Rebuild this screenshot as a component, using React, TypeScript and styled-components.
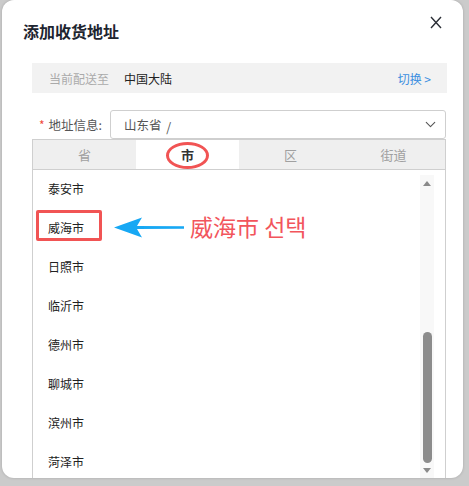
import React, { useState } from 'react';
import styled, { createGlobalStyle } from 'styled-components';
import { ChevronDown } from 'lucide-react';

const GlobalStyle = createGlobalStyle`
  html, body {
    margin: 0;
    padding: 0;
    background: #cbcbcb;
  }
  body {
    font-family: 'Noto Sans CJK SC', 'Noto Sans', sans-serif;
  }
`;

const TABS = ['省', '市', '区', '街道'];
const CITIES = ['泰安市', '威海市', '日照市', '临沂市', '德州市', '聊城市', '滨州市', '菏泽市'];

export default function App() {
  const [activeTab, setActiveTab] = useState(1);
  return (
    <Page>
      <GlobalStyle />
      <Dialog>
        <Header>
          <Title>添加收货地址</Title>
          <CloseButton>
            <svg width="12" height="13" viewBox="0 0 12 13">
              <path d="M1 1 L11 12 M11 1 L1 12" stroke="#2b2f36" strokeWidth="1.4" fill="none" />
            </svg>
          </CloseButton>
        </Header>
        <Body>
          <InfoBar>
            <InfoLabel>当前配送至</InfoLabel>
            <InfoValue>中国大陆</InfoValue>
            <SwitchLink>切换 &gt;</SwitchLink>
          </InfoBar>
          <FieldRow>
            <FieldLabel>
              <Required>*</Required>
              地址信息:
            </FieldLabel>
            <Select>
              <SelectText>山东省 <Slash>/</Slash></SelectText>
              <ChevronDown size={17} strokeWidth={1.5} color="#555" />
            </Select>
          </FieldRow>
          <Panel>
            <TabBar>
              {TABS.map((t, i) => (
                <Tab key={t} $active={i === activeTab} onClick={() => setActiveTab(i)}>
                  {t}
                  {i === 1 && <TabRing />}
                </Tab>
              ))}
            </TabBar>
            <ListArea>
              <List>
                {CITIES.map((c) => (
                  <Row key={c}>
                    {c}
                    {c === '威海市' && (
                      <>
                        <HighlightBox />
                        <Arrow width="70" height="21" viewBox="0 0 70 21">
                          <path d="M0 10.5 L28 0.5 L23 9 L70 9.3 L70 11.7 L23 12 L28 20.5 Z" fill="#17a8f4" />
                        </Arrow>
                        <Note>威海市 선택</Note>
                      </>
                    )}
                  </Row>
                ))}
              </List>
              <Scrollbar>
                <ArrowUp />
                <Spacer />
                <Thumb />
                <ArrowDown />
              </Scrollbar>
            </ListArea>
          </Panel>
        </Body>
      </Dialog>
    </Page>
  );
}

const Page = styled.div`
  height: 486px;
  padding: 0 6px 8px 2px;
  box-sizing: border-box;
  background: #cbcbcb;
`;

const Dialog = styled.div`
  height: 478px;
  background: #fff;
  border-radius: 12px;
  box-shadow: 0 0 3px rgba(0, 0, 0, 0.18);
  display: flex;
  flex-direction: column;
  overflow: hidden;
`;

const Header = styled.div`
  height: 63px;
  flex-shrink: 0;
  display: flex;
  align-items: center;
  justify-content: space-between;
  padding: 0 21px 2px 21px;
  box-sizing: border-box;
`;

const Title = styled.div`
  font-size: 16px;
  font-weight: 700;
  color: #1e2530;
  line-height: 20px;
`;

const CloseButton = styled.div`
  align-self: flex-start;
  margin-top: 16px;
  width: 12px;
  height: 13px;
  display: flex;
  cursor: pointer;
`;

const Body = styled.div`
  flex: 1;
  min-height: 0;
  display: flex;
  flex-direction: column;
  margin: 0 16px 0 30px;
`;

const InfoBar = styled.div`
  height: 30px;
  flex-shrink: 0;
  background: #f2f2f2;
  display: flex;
  align-items: center;
  padding: 0 16px 0 17px;
  font-size: 12px;
`;

const InfoLabel = styled.span`
  color: #aaa;
  width: 75px;
`;

const InfoValue = styled.span`
  color: #222;
  flex: 1;
`;

const SwitchLink = styled.span`
  color: #3b8ee0;
  cursor: pointer;
`;

const FieldRow = styled.div`
  margin-top: 17px;
  height: 29px;
  flex-shrink: 0;
  display: flex;
  align-items: stretch;
`;

const FieldLabel = styled.div`
  width: 78px;
  flex-shrink: 0;
  display: flex;
  align-items: center;
  justify-content: flex-end;
  padding-right: 8px;
  box-sizing: border-box;
  font-size: 12.5px;
  color: #555;
`;

const Required = styled.span`
  color: #f04a3a;
  margin-right: 4px;
  font-size: 12px;
`;

const Select = styled.div`
  flex: 1;
  margin-right: 1px;
  border: 1px solid #cfcfcf;
  border-radius: 3px;
  display: flex;
  align-items: center;
  justify-content: space-between;
  padding: 0 6px 0 13px;
  box-sizing: border-box;
`;

const SelectText = styled.span`
  font-size: 12.5px;
  color: #555;
`;

const Slash = styled.span`
  margin-left: 2px;
  position: relative;
  top: 2px;
`;

const Panel = styled.div`
  flex: 1;
  min-height: 0;
  display: flex;
  flex-direction: column;
  border: 1px solid #cfcfcf;
  border-bottom: none;
  margin-right: 1px;
`;

const TabBar = styled.div`
  height: 29px;
  flex-shrink: 0;
  display: grid;
  grid-template-columns: repeat(4, 1fr);
  background: #efefef;
  border-bottom: 1px solid #cfcfcf;
`;

const Tab = styled.div<{ $active: boolean }>`
  position: relative;
  display: flex;
  align-items: center;
  justify-content: center;
  font-size: 13px;
  cursor: pointer;
  background: ${({ $active }) => ($active ? '#fff' : 'transparent')};
  color: ${({ $active }) => ($active ? '#333' : '#a0a0a0')};
  font-weight: ${({ $active }) => ($active ? 700 : 400)};
`;

const TabRing = styled.span`
  position: absolute;
  left: 50%;
  top: 2px;
  width: 43px;
  height: 27px;
  margin-left: -22px;
  border: 3px solid #f15454;
  border-radius: 50%;
  box-sizing: border-box;
`;

const ListArea = styled.div`
  flex: 1;
  min-height: 0;
  display: flex;
  overflow: hidden;
`;

const List = styled.div`
  flex: 1;
  display: flex;
  flex-direction: column;
  margin-top: -1px;
`;

const Row = styled.div`
  position: relative;
  height: 39px;
  flex-shrink: 0;
  display: flex;
  align-items: center;
  padding-left: 15px;
  font-size: 12px;
  color: #222;
`;

const HighlightBox = styled.span`
  position: absolute;
  left: 3px;
  top: 2px;
  width: 66px;
  height: 31px;
  border: 3px solid #f15454;
  border-radius: 2px;
  box-sizing: border-box;
`;

const Arrow = styled.svg`
  position: absolute;
  left: 81px;
  top: 9px;
`;

const Note = styled.span`
  position: absolute;
  left: 157px;
  top: 50%;
  transform: translateY(-55%);
  font-family: 'Noto Sans CJK KR', 'Noto Sans CJK SC', sans-serif;
  font-size: 23px;
  color: #f2555c;
  white-space: nowrap;
`;

const Scrollbar = styled.div`
  width: 14px;
  margin: 5px 11px 0 0;
  background: #f8f8f8;
  display: flex;
  flex-direction: column;
  align-items: center;
  padding-bottom: 5px;
`;

const ArrowUp = styled.span`
  margin-top: 6px;
  width: 0;
  height: 0;
  border-left: 4.5px solid transparent;
  border-right: 4.5px solid transparent;
  border-bottom: 5px solid #8a8a8a;
`;

const ArrowDown = styled.span`
  margin-top: 5px;
  width: 0;
  height: 0;
  border-left: 4.5px solid transparent;
  border-right: 4.5px solid transparent;
  border-top: 5px solid #8a8a8a;
`;

const Spacer = styled.div`
  flex: 1;
`;

const Thumb = styled.div`
  width: 9px;
  height: 131px;
  border-radius: 5px;
  background: #8c8c8c;
`;
